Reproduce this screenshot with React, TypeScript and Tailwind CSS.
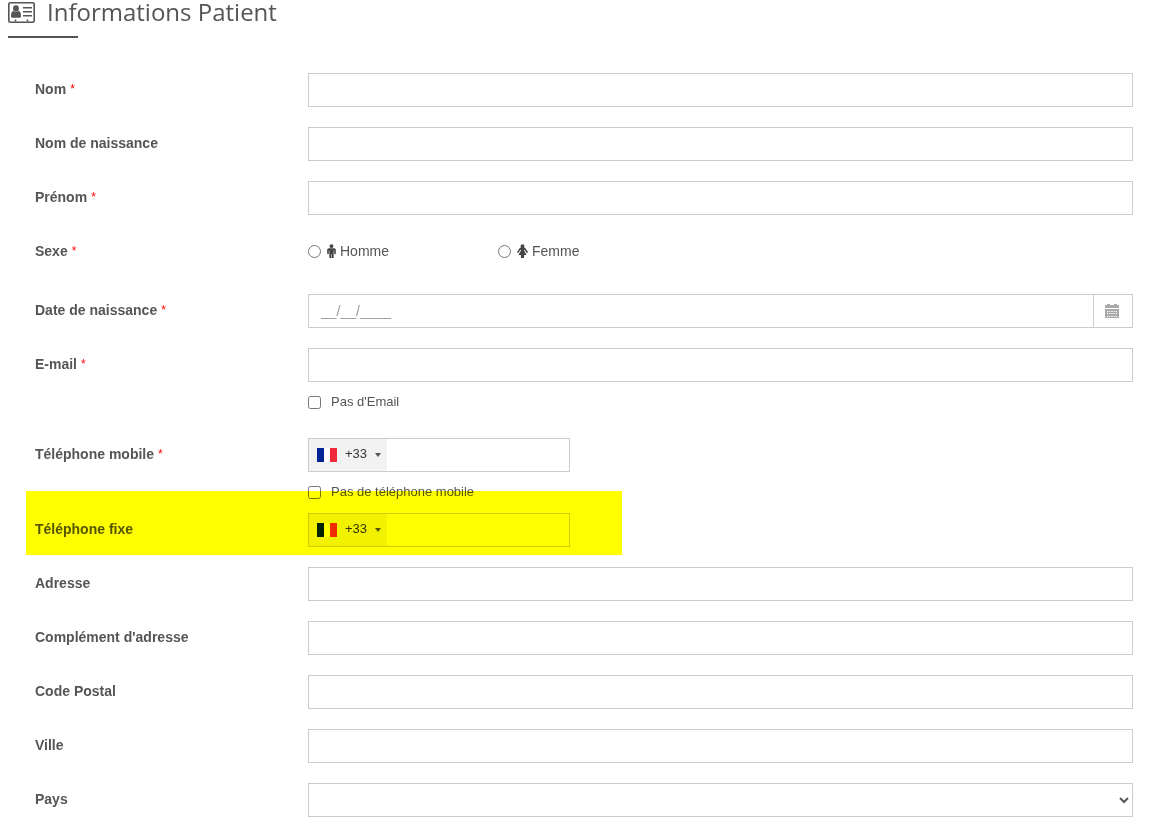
import { useState } from "react";

const inputClass = "h-[34px] w-full min-w-0 border border-[#ccc] bg-white px-3 text-sm text-[#555] outline-none focus:border-[#66afe9]";

const CardIcon = () => (
  <svg width="27" height="21" viewBox="0 0 27 21" fill="none" aria-hidden="true">
    <rect x="0.800" y="0.800" width="25.400" height="19.400" rx="1.500" stroke="#555" strokeWidth="1.600" />
    <ellipse cx="8" cy="6.500" rx="2.900" ry="3.200" fill="#555" />
    <path d="M3 14.500c0-3.400.8-5.400 2.600-5.400 1.400 1.300 3.400 1.300 4.800 0 1.800 0 2.600 2 2.600 5.400 0 .7-.5 1.200-1.200 1.200H4.200c-.7 0-1.200-.5-1.200-1.200z" fill="#555" />
    <path d="M15 5.700h9M15 9.700h9M15 13.700h9" stroke="#555" strokeWidth="1.600" />
    <path d="M7.500 17.500v2M19.500 17.500v2" stroke="#555" strokeWidth="1.600" />
  </svg>
);

const MaleIcon = () => (
  <svg width="9" height="14" viewBox="0 0 1024 1664" fill="#444" aria-hidden="true">
    <path d="M1024 704v416q0 40-28 68t-68 28-68-28-28-68v-352h-64v912q0 46-33 79t-79 33-79-33-33-79v-464h-64v464q0 46-33 79t-79 33-79-33-33-79v-912h-64v352q0 40-28 68t-68 28-68-28-28-68v-416q0-80 56-136t136-56h640q80 0 136 56t56 136zM736 256q0 93-65.500 158.500t-158.500 65.500-158.500-65.500-65.500-158.500 65.500-158.500 158.500-65.500 158.500 65.500 65.500 158.500z" />
  </svg>
);

const FemaleIcon = () => (
  <svg width="11" height="14" viewBox="0 0 1280 1664" fill="#444" aria-hidden="true">
    <path d="M1280 960q0 40-28 68t-68 28q-51 0-80-43l-227-341h-45v132l247 411q9 15 9 33 0 26-19 45t-45 19h-192v272q0 46-33 79t-79 33h-160q-46 0-79-33t-33-79v-272h-192q-26 0-45-19t-19-45q0-18 9-33l247-411v-132h-45l-227 341q-29 43-80 43-40 0-68-28t-28-68q0-29 16-53l256-384q73-107 176-107h384q103 0 176 107l256 384q16 24 16 53zM864 256q0 93-65.500 158.500t-158.500 65.500-158.500-65.500-65.500-158.500 65.500-158.500 158.500-65.500 158.500 65.500 65.500 158.500z" />
  </svg>
);

const CalendarIcon = () => (
  <svg width="14" height="14" viewBox="0 0 14 14" aria-hidden="true">
    <path d="M0 4V2.500Q0 1 1 1h1V0h3v1h4V0h3v1h1q1 0 1 1.500V4zM0 5h14v8q0 1-1 1H1q-1 0-1-1z" fill="#aaa" />
    <path d="M2 7.500h10M2 9.500h10M2 12.500h10" stroke="#fff" strokeDasharray="1.200 1" />
  </svg>
);

const FlagFr = () => (
  <svg width="20" height="14" viewBox="0 0 20 14" aria-hidden="true">
    <path d="M0 0h7v14H0z" fill="#002496" />
    <path d="M7 0h6v14H7z" fill="#fff" />
    <path d="M13 0h7v14h-7z" fill="#ef2b3a" />
  </svg>
);

type RowProps = { label: string; htmlFor?: string; required?: boolean; children: React.ReactNode };

const Row = ({ label, htmlFor, required, children }: RowProps) => {
  const content = (
    <>
      {label}
      {required && <span className="ml-1 align-[1px] text-xs leading-4 font-normal text-[#f00]">*</span>}
    </>
  );
  return (
    <div className="flex items-start">
      {htmlFor ? (
        <label htmlFor={htmlFor} className="w-[273px] shrink-0 pt-1.5 text-sm font-bold">
          {content}
        </label>
      ) : (
        <span id="sexe-label" className="w-[273px] shrink-0 pt-1.5 text-sm font-bold">
          {content}
        </span>
      )}
      <div className="min-w-0 flex-1">{children}</div>
    </div>
  );
};

const TextRow = ({ id, label, required }: { id: string; label: string; required?: boolean }) => (
  <Row label={label} htmlFor={id} required={required}>
    <input id={id} type="text" className={inputClass} />
  </Row>
);

const PhoneInput = ({ id }: { id: string }) => (
  <div className="flex h-[34px] max-w-[262px] border border-[#ccc] bg-white">
    <button type="button" aria-label="Indicatif +33" className="flex w-[78px] shrink-0 items-center bg-[#f2f2f2] pl-2 text-[13px] text-[#333]">
      <FlagFr />
      <span className="ml-2 pb-0.5">+33</span>
      <svg className="ml-2" width="6" height="4" viewBox="0 0 6 4" aria-hidden="true">
        <path d="M0 0h6L3 4z" fill="#555" />
      </svg>
    </button>
    <input id={id} type="tel" className="w-full min-w-0 bg-transparent px-2 text-sm outline-none" />
  </div>
);

const Check = ({ id, label }: { id: string; label: string }) => (
  <div className="mt-2.5 flex h-5 items-center gap-2.5">
    <input id={id} type="checkbox" className="size-[13px]" />
    <label htmlFor={id} className="text-[13px] leading-5">
      {label}
    </label>
  </div>
);

const App = () => {
  const [sexe, setSexe] = useState("");
  const [pays, setPays] = useState("");

  return (
    <main className="min-h-screen bg-white pb-2 font-['Liberation_Sans',Arial,sans-serif] text-[#555]">
      <header className="px-2">
        <h1 className="flex h-9 items-start gap-3 font-['Open_Sans',sans-serif] text-2xl leading-6">
          <span className="pt-0.5">
            <CardIcon />
          </span>
          Informations Patient
        </h1>
        <div className="h-0.5 w-[70px] bg-[#555]" />
      </header>

      <form className="flex flex-col gap-5 pt-[35px] pr-7 pl-[35px]" onSubmit={e => e.preventDefault()}>
        <TextRow id="nom" label="Nom" required />
        <TextRow id="nom-naissance" label="Nom de naissance" />
        <TextRow id="prenom" label="Prénom" required />

        <Row label="Sexe" required>
          <div role="radiogroup" aria-labelledby="sexe-label" className="mb-[7px] flex h-8 items-center text-sm">
            <div className="flex w-[190px] items-center">
              <input id="homme" type="radio" name="sexe" className="size-[13px]" checked={sexe === "H"} onChange={() => setSexe("H")} />
              <label htmlFor="homme" className="flex items-center gap-1 pl-1.5">
                <MaleIcon />
                Homme
              </label>
            </div>
            <div className="flex items-center">
              <input id="femme" type="radio" name="sexe" className="size-[13px]" checked={sexe === "F"} onChange={() => setSexe("F")} />
              <label htmlFor="femme" className="flex items-center gap-1 pl-1.5">
                <FemaleIcon />
                Femme
              </label>
            </div>
          </div>
        </Row>

        <Row label="Date de naissance" htmlFor="date-naissance" required>
          <div className="flex">
            <input id="date-naissance" type="text" placeholder="__/__/____" className={`${inputClass} placeholder:text-[#999]`} />
            <button type="button" aria-label="Calendrier" className="flex h-[34px] w-[39px] shrink-0 items-center justify-center border border-l-0 border-[#ccc] bg-white pr-0.5">
              <CalendarIcon />
            </button>
          </div>
        </Row>

        <Row label="E-mail" htmlFor="email" required>
          <input id="email" type="email" className={inputClass} />
          <Check id="pas-email" label="Pas d'Email" />
        </Row>

        <div className="relative flex flex-col gap-[11px] pt-1.5">
          <Row label="Téléphone mobile" htmlFor="mobile" required>
            <PhoneInput id="mobile" />
            <Check id="pas-mobile" label="Pas de téléphone mobile" />
          </Row>
          <Row label="Téléphone fixe" htmlFor="fixe">
            <PhoneInput id="fixe" />
          </Row>
          {/* highlighter over the landline row */}
          <div className="pointer-events-none absolute -bottom-2 -left-[9px] h-16 w-[596px] max-w-full bg-[#ff0] mix-blend-multiply" />
        </div>

        <TextRow id="adresse" label="Adresse" />
        <TextRow id="complement" label="Complément d'adresse" />
        <TextRow id="code-postal" label="Code Postal" />
        <TextRow id="ville" label="Ville" />
        <Row label="Pays" htmlFor="pays">
          <select
            id="pays"
            value={pays}
            onChange={e => setPays(e.target.value)}
            className="h-[34px] w-full border border-[#ccc] bg-white pl-3 text-sm text-[#555] outline-none"
          >
            <option value=""></option>
          </select>
        </Row>
      </form>
    </main>
  );
};

export default App;
